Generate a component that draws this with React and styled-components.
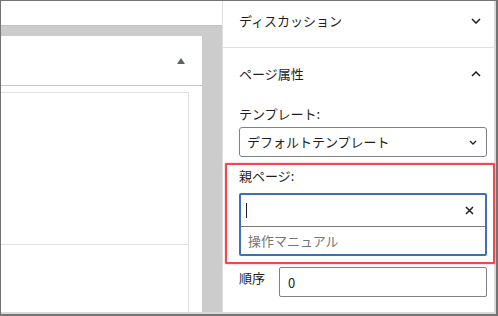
import React from 'react';
import styled, { createGlobalStyle } from 'styled-components';

const GlobalStyle = createGlobalStyle`
  html, body {
    margin: 0;
    padding: 0;
    background: #fff;
  }
  body {
    font-family: "Noto Sans CJK JP", "Noto Sans", "Liberation Sans", sans-serif;
    color: #1e1e1e;
  }
`;

const Frame = styled.div`
  width: 498px;
  height: 316px;
  box-sizing: border-box;
  border-style: solid;
  border-color: #737373;
  border-width: 1px 2px 2px 1px;
  display: flex;
  overflow: hidden;
  background: #fff;
`;

const Screen = styled.div`
  flex: 1;
  display: flex;
  min-width: 0;
  min-height: 0;
  border-right: 2px solid #d9d9d9;
  border-bottom: 2px solid #d9d9d9;
`;

const EditorArea = styled.div`
  width: 221px;
  flex-shrink: 0;
  display: flex;
  flex-direction: column;
`;

const TopStrip = styled.div`
  height: 24px;
  flex-shrink: 0;
  background: #fff;
`;

const Canvas = styled.div`
  flex: 1;
  min-height: 0;
  background: #cccccc;
  border-top: 1px solid #c2c2c2;
  padding: 10px 20px 0 0;
  display: flex;
`;

const Panel = styled.div`
  flex: 1;
  min-height: 0;
  background: #fff;
  display: flex;
  flex-direction: column;
  overflow: hidden;
`;

const PanelHeader = styled.div`
  height: 49px;
  flex-shrink: 0;
  border-bottom: 1px solid #c8c8c8;
  display: flex;
  align-items: center;
  justify-content: flex-end;
  padding-right: 17px;
`;

const Triangle = styled.span`
  width: 0;
  height: 0;
  border-left: 4px solid transparent;
  border-right: 4px solid transparent;
  border-bottom: 6px solid #5a6470;
`;

const PanelBody = styled.div`
  flex: 1;
  min-height: 0;
  padding: 6px 13px 0 0;
  display: flex;
  align-items: flex-start;
`;

const InnerBox = styled.div`
  flex: 1;
  border: 1px solid #e0e0e0;
  border-left: none;
  border-bottom: none;
`;

const InnerRow = styled.div`
  height: ${p => p.$h}px;
  border-bottom: ${p => (p.$line ? '1px solid #e0e0e0' : 'none')};
`;

const Sidebar = styled.div`
  flex: 1;
  min-width: 0;
  border-left: 1px solid #e0e0e0;
  display: flex;
  flex-direction: column;
  font-size: 13px;
  line-height: 20px;
`;

const SectionHeader = styled.div`
  display: flex;
  flex-shrink: 0;
  align-items: flex-start;
  justify-content: space-between;
  padding: ${p => p.$top}px 13px 0 16px;
  height: ${p => p.$h}px;
  box-sizing: border-box;
  border-bottom: ${p => (p.$line ? '1px solid #e0e0e0' : 'none')};
`;

const ChevronBox = styled.span`
  height: 20px;
  display: flex;
  align-items: center;
`;

const SectionBody = styled.div`
  padding: 0 7px 0 16px;
  display: flex;
  flex-direction: column;
`;

const Label = styled.div`
  margin-top: ${p => p.$mt || 0}px;
`;

const Select = styled.div`
  margin-top: 3px;
  height: 30px;
  box-sizing: border-box;
  border: 1px solid #7e8288;
  border-radius: 3px;
  display: flex;
  align-items: center;
  justify-content: space-between;
  padding: 0 9px 0 7px;
`;

const Highlight = styled.div`
  margin: 6px -8px 0 -14px;
  padding: 1px 6px 6px 12px;
  border: 2px solid #f4464f;
  box-shadow: 0 0 2px rgba(244, 70, 79, 0.55);
  border-radius: 1px;
`;

const Combo = styled.div`
  margin-top: 7px;
  border: 2px solid #3f70b3;
  border-radius: 2px;
`;

const ComboInput = styled.div`
  height: 31px;
  border-bottom: 1px solid #7a7a7a;
  display: flex;
  align-items: center;
  justify-content: space-between;
  padding: 0 11px 0 5px;
`;

const Caret = styled.span`
  width: 1px;
  height: 15px;
  background: #1e1e1e;
`;

const Suggestion = styled.div`
  height: 27px;
  display: flex;
  align-items: center;
  padding-left: 7px;
  color: #757575;
`;

const OrderRow = styled.div`
  margin-top: 3px;
  display: flex;
  align-items: flex-start;
`;

const OrderLabel = styled.div`
  width: 40px;
  padding-top: 1px;
`;

const NumberInput = styled.div`
  flex: 1;
  height: 30px;
  box-sizing: border-box;
  border: 1px solid #7e8288;
  border-radius: 2px;
  display: flex;
  align-items: center;
  padding: 2px 8px 0;
`;

const Chevron = ({ up, w = 10, h = 6, sw = 1.5 }) => (
  <svg width={w} height={h} viewBox={`0 0 ${w} ${h}`} fill="none">
    <path
      d={up ? `M1 ${h - 1} L${w / 2} 1 L${w - 1} ${h - 1}` : `M1 1 L${w / 2} ${h - 1} L${w - 1} 1`}
      stroke="#1e1e1e"
      strokeWidth={sw}
    />
  </svg>
);

const Close = () => (
  <svg width="9" height="9" viewBox="0 0 9 9">
    <path d="M1 1 L8 8 M8 1 L1 8" stroke="#1e1e1e" strokeWidth="1.5" />
  </svg>
);

export default function App() {
  return (
    <>
      <GlobalStyle />
      <Frame>
        <Screen>
          <EditorArea>
            <TopStrip />
            <Canvas>
              <Panel>
                <PanelHeader>
                  <Triangle />
                </PanelHeader>
                <PanelBody>
                  <InnerBox>
                    <InnerRow $h={151} $line />
                    <InnerRow $h={80} />
                  </InnerBox>
                </PanelBody>
              </Panel>
            </Canvas>
          </EditorArea>

          <Sidebar>
            <SectionHeader $top={10} $h={47} $line>
              <span>ディスカッション</span>
              <ChevronBox>
                <Chevron />
              </ChevronBox>
            </SectionHeader>

            <SectionHeader $top={16} $h={36}>
              <span>ページ属性</span>
              <ChevronBox>
                <Chevron up />
              </ChevronBox>
            </SectionHeader>

            <SectionBody>
              <Label $mt={20}>テンプレート:</Label>
              <Select>
                <span>デフォルトテンプレート</span>
                <Chevron w={8} h={5} sw={1.3} />
              </Select>

              <Highlight>
                <Label>親ページ:</Label>
                <Combo>
                  <ComboInput>
                    <Caret />
                    <Close />
                  </ComboInput>
                  <Suggestion>操作マニュアル</Suggestion>
                </Combo>
              </Highlight>

              <OrderRow>
                <OrderLabel>順序</OrderLabel>
                <NumberInput>0</NumberInput>
              </OrderRow>
            </SectionBody>
          </Sidebar>
        </Screen>
      </Frame>
    </>
  );
}
